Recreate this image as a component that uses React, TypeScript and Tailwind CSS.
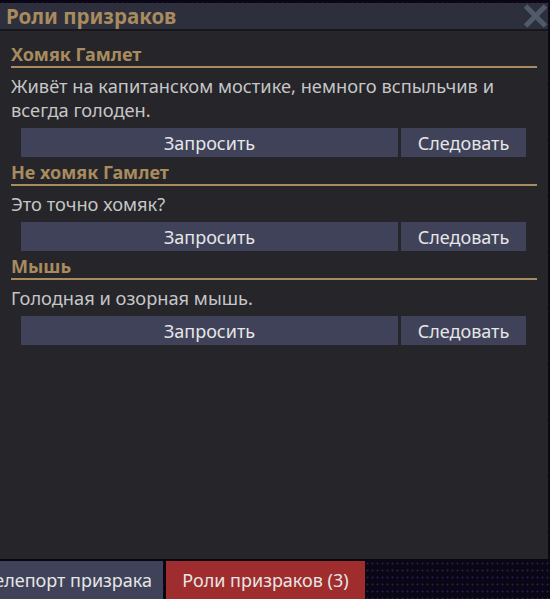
import { useState } from "react";

type GhostRole = {
	name: string;
	description: string;
};

const roles: GhostRole[] = [
	{
		name: "Хомяк Гамлет",
		description: "Живёт на капитанском мостике, немного вспыльчив и всегда голоден.",
	},
	{ name: "Не хомяк Гамлет", description: "Это точно хомяк?" },
	{ name: "Мышь", description: "Голодная и озорная мышь." },
];

function CloseIcon() {
	return (
		<svg viewBox="0 0 25 24" className="w-[25px] h-[24px]" aria-hidden>
			<path
				d="M2.5 2L22.5 22M22.5 2L2.5 22"
				stroke="#4f5b69"
				strokeWidth="5"
				strokeLinecap="butt"
				fill="none"
			/>
		</svg>
	);
}

function RoleSection({ role }: { role: GhostRole }) {
	return (
		<section className="mt-[5px] first:mt-0">
			<h2 className="text-[18px] leading-[20px] font-bold text-[#a88b5e] pb-[2px] border-b-2 border-[#a88b5e]">
				{role.name}
			</h2>
			<p className="mt-[6px] text-[18.25px] leading-[24px] text-[#c6c6c6]">
				{role.description}
			</p>
			<div className="mt-[6px] ml-[10px] mr-[11px] flex gap-[3px] h-[29px]">
				<button
					type="button"
					className="flex-1 bg-[#3f4259] text-[#e6e6e6] text-[18px] leading-none"
				>
					Запросить
				</button>
				<button
					type="button"
					className="w-[125px] bg-[#3f4259] text-[#e6e6e6] text-[18px] leading-none"
				>
					Следовать
				</button>
			</div>
		</section>
	);
}

export default function App() {
	const [open, setOpen] = useState(true);

	return (
		<div
			className="w-[550px] h-[599px] overflow-hidden flex flex-col bg-[#0a0614] bg-[radial-gradient(circle,#2b1b5e_0.8px,transparent_1.2px)] bg-[length:5px_7px]"
			style={{ fontFamily: '"Noto Sans", "Open Sans", sans-serif' }}
		>
			<div className="mt-[3px] w-[548px] h-[556px] flex flex-col bg-[#25252a]">
				<div className="h-[26px] bg-[#2e2f3d] flex items-center justify-between pl-[6px]">
					<h1 className="text-[20.5px] leading-none font-bold text-[#a88b5e]">
						Роли призраков
					</h1>
					<button type="button" onClick={() => setOpen(!open)} aria-label="Закрыть">
						<CloseIcon />
					</button>
				</div>
				<div className="h-[2px] bg-[#18181c]" />
				<div className="px-[11px] pt-[13px]">
					{roles.map((role) => (
						<RoleSection key={role.name} role={role} />
					))}
				</div>
			</div>
			<div className="mt-[2px] ml-[-26px] flex gap-[3px] h-[38px]">
				<button
					type="button"
					className="w-[189px] bg-[#3f4259] text-[#e6e6e6] text-[18px] leading-none whitespace-nowrap"
				>
					Телепорт призрака
				</button>
				<button
					type="button"
					className="w-[199px] bg-[#9f2d2d] text-[#e6e6e6] text-[18px] leading-none whitespace-nowrap"
				>
					Роли призраков (3)
				</button>
			</div>
		</div>
	);
}
